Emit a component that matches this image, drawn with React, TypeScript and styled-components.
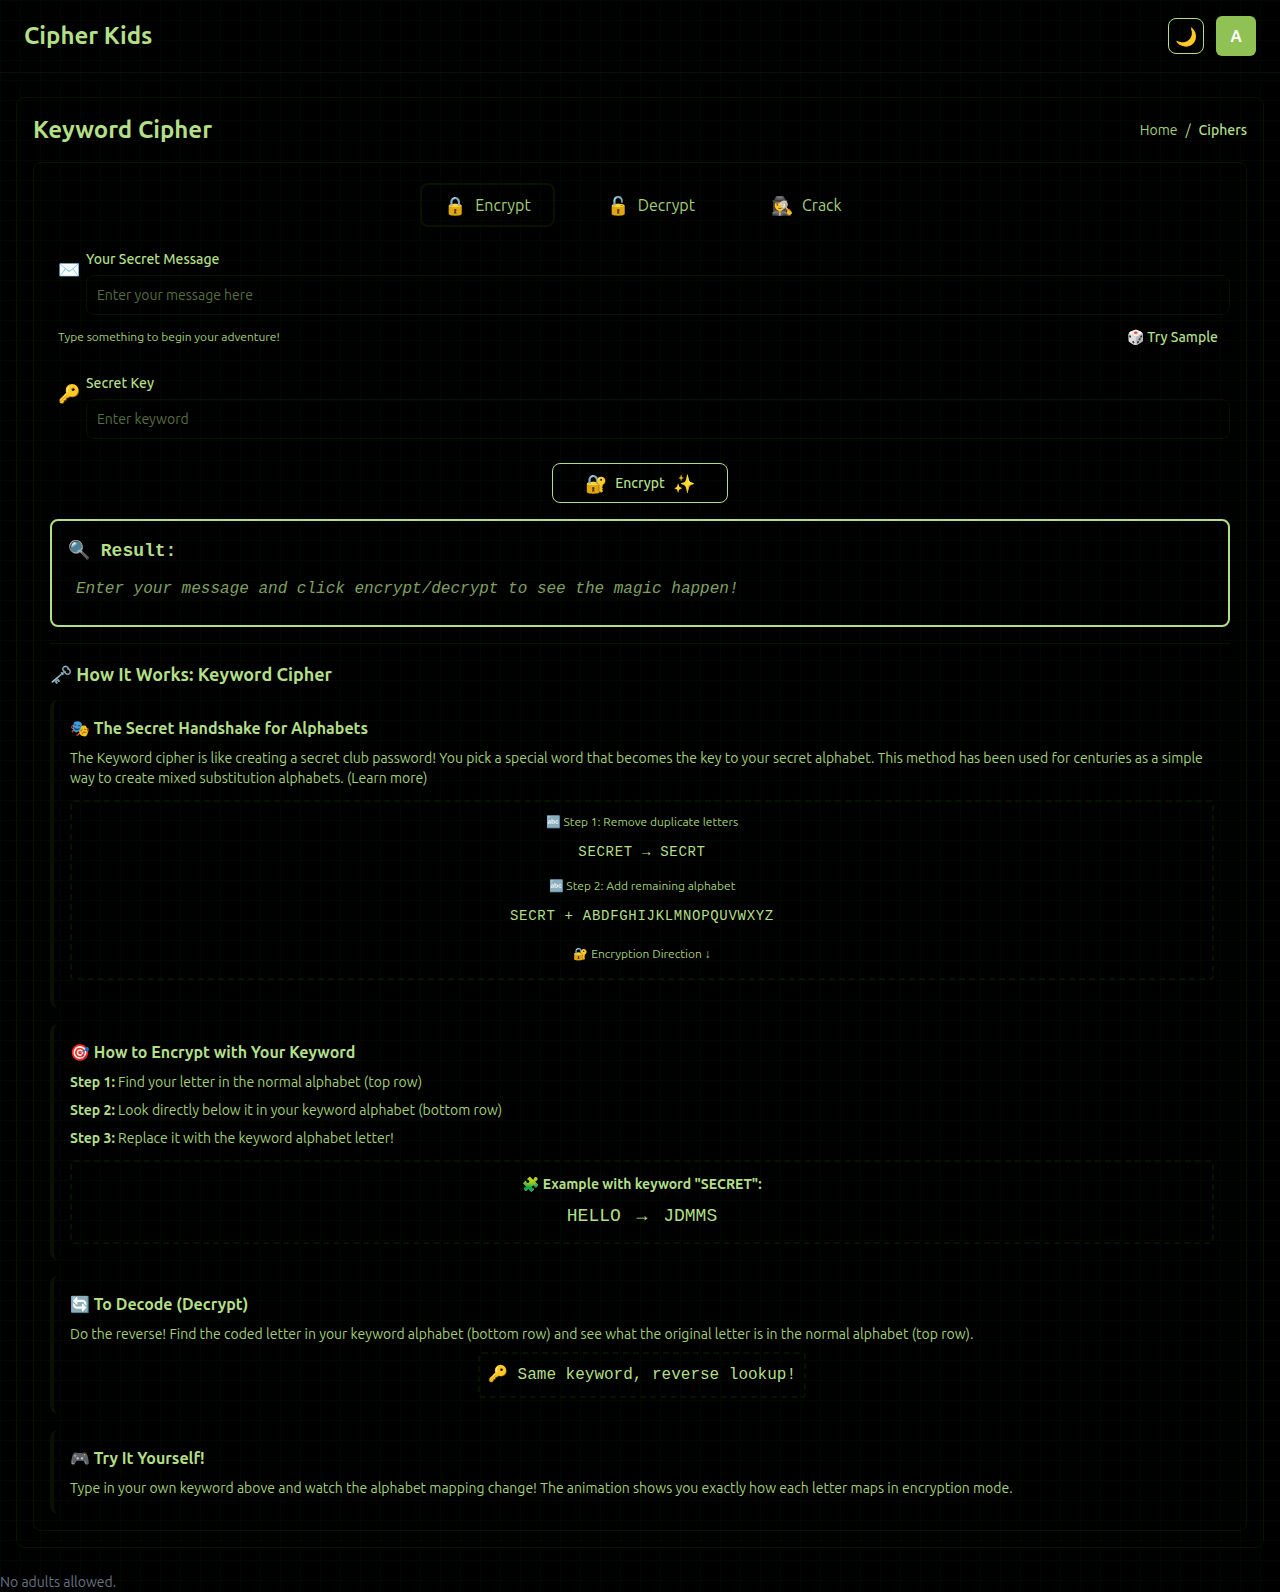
import React, { useState } from "react";
import styled, { createGlobalStyle } from "styled-components";

const green = "#b2df87";
const soft = "#a4d079";
const edge = "#081200";
const sans = `"Ubuntu", "Open Sans", "Noto Sans", sans-serif`;
const mono = `"Liberation Mono", monospace`;

const GlobalStyle = createGlobalStyle`
  *, *::before, *::after { box-sizing: border-box; }
  body {
    margin: 0;
    background-color: #000;
    background-image:
      linear-gradient(#000900 1px, transparent 1px),
      linear-gradient(90deg, #000900 1px, transparent 1px);
    background-size: 20px 20px;
    color: ${green};
    font-family: ${sans};
    font-size: 14px;
    line-height: 20px;
  }
  h1, h2, h3, h4, p { margin: 0; }
  button, input { font: inherit; color: inherit; }
`;

const Header = styled.header`
  display: flex;
  align-items: center;
  justify-content: space-between;
  padding: 16px 24px;
  border-bottom: 1px solid ${edge};
`;
const Title = styled.h1`
  font-size: 24px;
  line-height: 32px;
  font-weight: 600;
`;
const PageTitle = styled(Title).attrs({ as: "h2" })``;
const Actions = styled.div`
  display: flex;
  align-items: center;
  gap: 12px;
`;
const ThemeButton = styled.button`
  display: grid;
  place-items: center;
  width: 36px;
  height: 36px;
  padding: 0;
  border: 1px solid ${green};
  border-radius: 8px;
  background: transparent;
  font-size: 18px;
`;
const Avatar = styled.button`
  width: 40px;
  height: 40px;
  padding: 0;
  border: 0;
  border-radius: 6px;
  background: #90c154;
  color: #fff;
  font-size: 16px;
  font-weight: 700;
`;

const Main = styled.main`
  padding: 24px 16px;
`;
const Card = styled.section`
  padding: 16px;
  border: 1px solid ${edge};
  border-radius: 8px;
`;
const TitleBar = styled.div`
  display: flex;
  align-items: center;
  justify-content: space-between;
  margin-bottom: 16px;
`;
const Crumbs = styled.nav`
  display: flex;
  gap: 8px;
`;
const Crumb = styled.a`
  color: ${soft};
  text-decoration: none;
`;
const Current = styled.span`
  font-weight: 500;
`;

const Tabs = styled.div`
  display: flex;
  justify-content: center;
  gap: 28px;
  padding: 4px 0 4px 6px;
`;
const Tab = styled.button<{ $active: boolean }>`
  display: flex;
  align-items: center;
  gap: 9px;
  height: 44px;
  padding: 0 22px;
  border: 2px solid ${(p) => (p.$active ? edge : "transparent")};
  border-radius: 8px;
  background: transparent;
  color: ${soft};
  font-size: 16px;
`;
const Emoji = styled.span`
  font-size: 18px;
  line-height: 24px;
`;

const Field = styled.div`
  display: flex;
  align-items: flex-start;
  gap: 6px;
  padding-left: 8px;
`;
const FieldIcon = styled(Emoji)`
  padding-top: 8px;
`;
const FieldBody = styled.div`
  display: flex;
  flex-direction: column;
  flex: 1;
  gap: 6px;
`;
const Label = styled.label`
  font-weight: 500;
`;
const Input = styled.input`
  width: 100%;
  height: 40px;
  padding: 0 10px;
  border: 1px solid ${edge};
  border-radius: 8px;
  background: transparent;
  &::placeholder { color: #576e42; opacity: 1; }
`;
const Form = styled.form`
  padding-top: 18px;
`;
const HintRow = styled.div`
  display: flex;
  align-items: center;
  justify-content: space-between;
  margin: 8px 0 22px;
  padding-left: 8px;
`;
const Hint = styled.p`
  color: ${soft};
  font-size: 12px;
  line-height: 16px;
`;
const SampleButton = styled.button`
  height: 28px;
  padding: 0 12px;
  border: 0;
  background: transparent;
  font-weight: 500;
`;
const Submit = styled.button`
  display: flex;
  align-items: center;
  gap: 8px;
  height: 40px;
  margin: 24px auto 16px;
  padding: 0 32px;
  border: 1px solid ${green};
  border-radius: 8px;
  background: transparent;
  font-weight: 500;
`;

const Result = styled.section`
  padding: 16px;
  border: 2px solid ${green};
  border-radius: 8px;
  font-family: ${mono};
`;
const ResultTitle = styled.h3`
  font-size: 18px;
  line-height: 28px;
`;
const ResultText = styled.p`
  padding: 12px 8px 8px;
  color: #7fa062;
  font-size: 16px;
  line-height: 24px;
  font-style: italic;
`;

const Guide = styled.section`
  display: flex;
  flex-direction: column;
  gap: 16px;
  margin-top: 16px;
  padding-top: 16px;
  border-top: 1px solid ${edge};
`;
const GuideTitle = styled.h3`
  margin-bottom: -4px;
  font-size: 18px;
  line-height: 28px;
  font-weight: 600;
`;
const Topic = styled.article`
  padding: 16px;
  border-left: 4px solid ${edge};
  border-radius: 8px;
`;
const TopicTitle = styled.h4`
  margin-bottom: 8px;
  font-size: 16px;
  line-height: 24px;
  font-weight: 600;
`;
const Text = styled.p`
  color: ${soft};
  & + & { margin-top: 8px; }
`;
const Strong = styled.strong`
  color: ${green};
  font-weight: 600;
`;
const Plain = styled.a`
  color: inherit;
  text-decoration: none;
`;
const Demo = styled.div<{ $after?: number }>`
  margin: 12px 0 ${(p) => p.$after ?? 0}px;
  padding: 12px;
  border: 2px dashed ${edge};
  border-radius: 4px;
  text-align: center;
`;
const Caption = styled.p`
  color: ${soft};
  font-size: 12px;
  line-height: 16px;
`;
const Direction = styled(Caption)`
  margin: 16px 0 4px;
`;
const Code = styled.p`
  margin: 8px 0 12px;
  font-family: ${mono};
  font-size: 14px;
  line-height: 28px;
  letter-spacing: 0.05em;
`;
const ExampleTitle = styled.p`
  font-weight: 600;
`;
const Example = styled.p`
  margin-top: 8px;
  font-family: ${mono};
  font-size: 18px;
  line-height: 28px;
`;
const Arrow = styled.span`
  margin: 0 5px;
`;
const NoteRow = styled.div`
  display: flex;
  justify-content: center;
  margin-top: 8px;
`;
const Note = styled.p`
  padding: 8px;
  border: 2px dashed ${edge};
  border-radius: 4px;
  font-family: ${mono};
  font-size: 16px;
  line-height: 26px;
`;
const Footer = styled.footer`
  color: #6b7280;
`;

const modes = [
  { name: "Encrypt", icon: "🔒" },
  { name: "Decrypt", icon: "🔓" },
  { name: "Crack", icon: "🕵️‍♀️" },
];

export default function App() {
  const [mode, setMode] = useState("Encrypt");
  return (
    <>
      <GlobalStyle />
      <Header>
        <Title>Cipher Kids</Title>
        <Actions>
          <ThemeButton aria-label="Switch theme">🌙</ThemeButton>
          <Avatar aria-label="Account">A</Avatar>
        </Actions>
      </Header>
      <Main>
        <Card>
          <TitleBar>
            <PageTitle>Keyword Cipher</PageTitle>
            <Crumbs aria-label="Breadcrumb">
              <Crumb href="#home">Home</Crumb>
              <span>/</span>
              <Current>Ciphers</Current>
            </Crumbs>
          </TitleBar>
          <Card>
            <Tabs>
              {modes.map((m) => (
                <Tab key={m.name} type="button" $active={m.name === mode} onClick={() => setMode(m.name)}>
                  <Emoji>{m.icon}</Emoji>
                  {m.name}
                </Tab>
              ))}
            </Tabs>
            <Form onSubmit={(e) => e.preventDefault()}>
              <Field>
                <FieldIcon>✉️</FieldIcon>
                <FieldBody>
                  <Label htmlFor="message">Your Secret Message</Label>
                  <Input id="message" placeholder="Enter your message here" />
                </FieldBody>
              </Field>
              <HintRow>
                <Hint>Type something to begin your adventure!</Hint>
                <SampleButton type="button">🎲 Try Sample</SampleButton>
              </HintRow>
              <Field>
                <FieldIcon>🔑</FieldIcon>
                <FieldBody>
                  <Label htmlFor="keyword">Secret Key</Label>
                  <Input id="keyword" placeholder="Enter keyword" />
                </FieldBody>
              </Field>
              <Submit type="submit">
                <Emoji>🔐</Emoji>
                Encrypt
                <Emoji>✨</Emoji>
              </Submit>
            </Form>
            <Result>
              <ResultTitle>🔍 Result:</ResultTitle>
              <ResultText>Enter your message and click encrypt/decrypt to see the magic happen!</ResultText>
            </Result>
            <Guide>
              <GuideTitle>🗝️ How It Works: Keyword Cipher</GuideTitle>
              <Topic>
                <TopicTitle>🎭 The Secret Handshake for Alphabets</TopicTitle>
                <Text>
                  The Keyword cipher is like creating a secret club password! You pick a special word that becomes the
                  key to your secret alphabet. This method has been used for centuries as a simple way to create mixed
                  substitution alphabets. <Plain href="#learn">(Learn more)</Plain>
                </Text>
                <Demo $after={12}>
                  <Caption>🔤 Step 1: Remove duplicate letters</Caption>
                  <Code>SECRET → SECRT</Code>
                  <Caption>🔤 Step 2: Add remaining alphabet</Caption>
                  <Code>SECRT + ABDFGHIJKLMNOPQUVWXYZ</Code>
                  <Direction>🔐 Encryption Direction ↓</Direction>
                </Demo>
              </Topic>
              <Topic>
                <TopicTitle>🎯 How to Encrypt with Your Keyword</TopicTitle>
                <Text><Strong>Step 1:</Strong> Find your letter in the normal alphabet (top row)</Text>
                <Text><Strong>Step 2:</Strong> Look directly below it in your keyword alphabet (bottom row)</Text>
                <Text><Strong>Step 3:</Strong> Replace it with the keyword alphabet letter!</Text>
                <Demo>
                  <ExampleTitle>🧩 Example with keyword "SECRET":</ExampleTitle>
                  <Example>
                    HELLO <Arrow>→</Arrow> JDMMS
                  </Example>
                </Demo>
              </Topic>
              <Topic>
                <TopicTitle>🔄 To Decode (Decrypt)</TopicTitle>
                <Text>
                  Do the reverse! Find the coded letter in your keyword alphabet (bottom row) and see what the original
                  letter is in the normal alphabet (top row).
                </Text>
                <NoteRow>
                  <Note>🔑 Same keyword, reverse lookup!</Note>
                </NoteRow>
              </Topic>
              <Topic>
                <TopicTitle>🎮 Try It Yourself!</TopicTitle>
                <Text>
                  Type in your own keyword above and watch the alphabet mapping change! The animation shows you exactly
                  how each letter maps in encryption mode.
                </Text>
              </Topic>
            </Guide>
          </Card>
        </Card>
      </Main>
      <Footer>No adults allowed.</Footer>
    </>
  );
}
